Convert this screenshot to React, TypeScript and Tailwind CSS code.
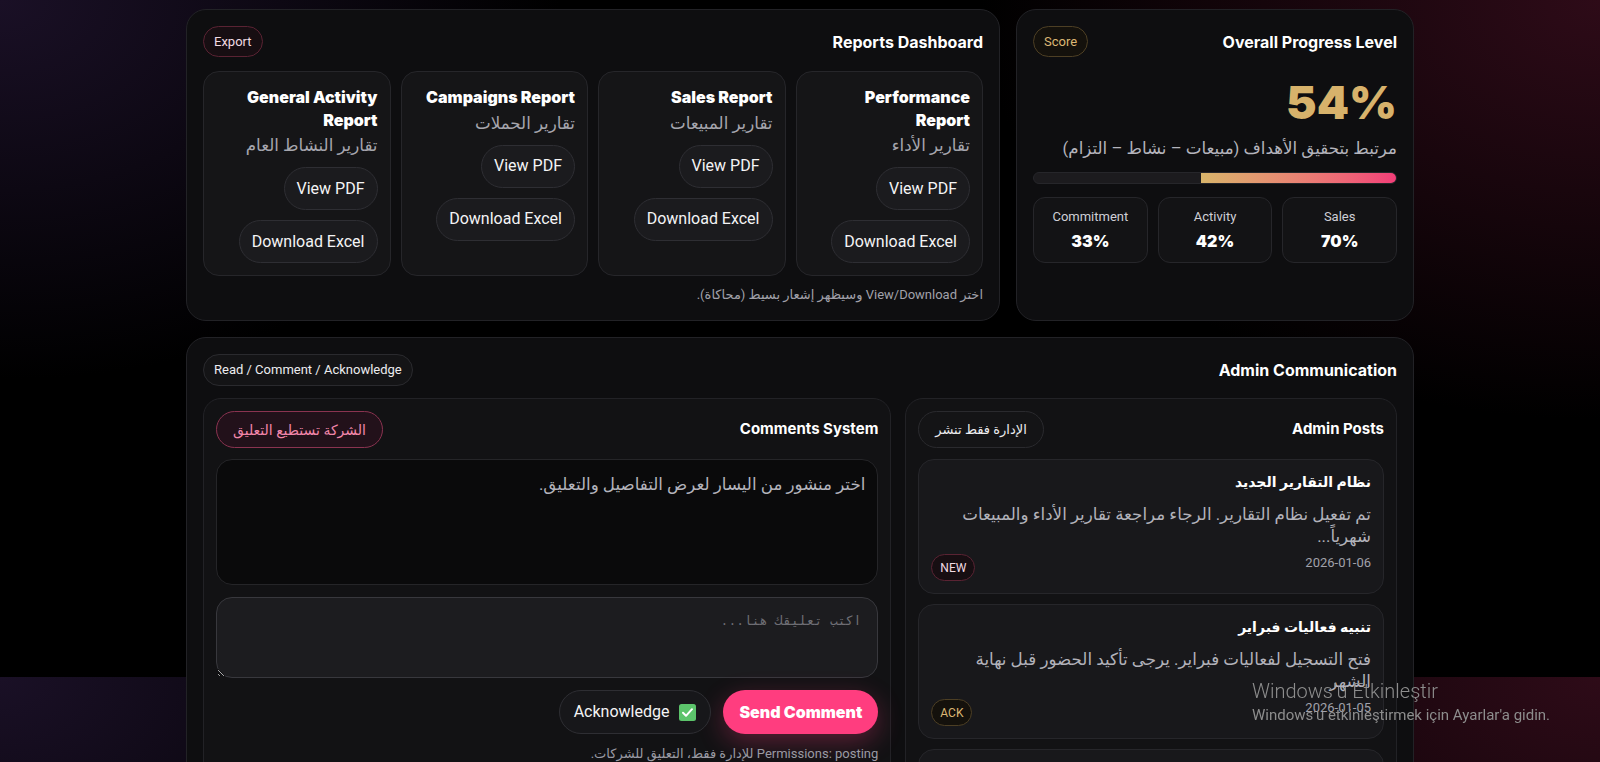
import React from 'react';

const reports = [
  { en: 'Performance Report', ar: 'تقارير الأداء' },
  { en: 'Sales Report', ar: 'تقارير المبيعات' },
  { en: 'Campaigns Report', ar: 'تقارير الحملات' },
  { en: 'General Activity Report', ar: 'تقارير النشاط العام' },
];

const stats = [
  { label: 'Sales', value: '70%' },
  { label: 'Activity', value: '42%' },
  { label: 'Commitment', value: '33%' },
];

const posts = [
  {
    title: 'نظام التقارير الجديد',
    body: 'تم تفعيل نظام التقارير. الرجاء مراجعة تقارير الأداء والمبيعات شهرياً...',
    date: '2026-01-06',
    tag: 'NEW',
  },
  {
    title: 'تنبيه فعاليات فبراير',
    body: 'فتح التسجيل لفعاليات فبراير. يرجى تأكيد الحضور قبل نهاية الشهر',
    date: '2026-01-05',
    tag: 'ACK',
  },
  {
    title: 'تحديث سياسة العمولات',
    body: 'تم تحديث نسب العمولات للربع الأول. راجع التفاصيل في قسم التقارير.',
    date: '2026-01-03',
    tag: 'NEW',
  },
];

const tones = {
  pink: 'border-[#5a2333] bg-[#170e12] text-[#f1dbe3]',
  hot: 'border-[#8a3350] bg-[#22111a] text-[#f287aa]',
  gold: 'border-[#4d3f24] bg-[#14110c] text-[#dcb774]',
  neutral: 'border-[#2a2a2e] bg-[#141416] text-[#ececef]',
};

function Pill({
  children,
  tone = 'neutral',
  className = '',
}: {
  children: React.ReactNode;
  tone?: keyof typeof tones;
  className?: string;
}) {
  return (
    <span
      className={`inline-flex shrink-0 items-center justify-center whitespace-nowrap rounded-full border ${tones[tone]} ${className}`}
    >
      {children}
    </span>
  );
}

function Btn({ children }: { children: React.ReactNode }) {
  return (
    <button className="flex h-[43px] items-center rounded-full border border-[#2e2e33] bg-[#1b1b1e] px-3 text-base text-[#f4f4f5]">
      {children}
    </button>
  );
}

function ProgressCard() {
  return (
    <section className="rounded-[20px] border border-[#222226] bg-[#0e0e10] p-4">
      <div className="flex items-center justify-between">
        <h2 className="font-['Inter',sans-serif] text-base font-bold text-white">Overall Progress Level</h2>
        <Pill tone="gold" className="h-[31px] px-2.5 text-[13px]">
          Score
        </Pill>
      </div>
      <div className="mt-[21px] font-['Inter',sans-serif] text-[46px] font-black leading-[48px] text-[#d7b26b]">
        54%
      </div>
      <p className="mt-2.5 text-[16.7px] leading-[26px] text-[#b4b4bc]">
        مرتبط بتحقيق الأهداف (مبيعات – نشاط – التزام)
      </p>
      <div className="mt-2.5 h-3 overflow-hidden rounded-full border border-[#26262a] bg-[#1c1b1e]">
        <div className="h-full w-[54%] bg-linear-to-r from-[#d8b46a] to-[#f23d78]" />
      </div>
      <div className="mt-[13px] grid grid-cols-3 gap-2.5">
        {stats.map((s) => (
          <div
            key={s.label}
            className="rounded-xl border border-[#26262a] bg-[#131315] py-2.5 text-center"
          >
            <div className="text-[13px] leading-[18px] text-[#cfcfd6]">{s.label}</div>
            <div className="mt-1 font-['Inter',sans-serif] text-base font-black leading-[22px] text-white">
              {s.value}
            </div>
          </div>
        ))}
      </div>
    </section>
  );
}

function ReportsCard() {
  return (
    <section className="rounded-[20px] border border-[#222226] bg-[#0e0e10] p-4">
      <div className="flex items-center justify-between">
        <h2 className="font-['Inter',sans-serif] text-base font-bold text-white">Reports Dashboard</h2>
        <Pill tone="pink" className="h-[31px] px-2.5 text-[13px]">
          Export
        </Pill>
      </div>
      <div className="mt-[14px] grid grid-cols-4 gap-2.5">
        {reports.map((r) => (
          <div key={r.en} className="rounded-2xl border border-[#26262a] bg-[#151517] px-3 pb-3 pt-3.5">
            <div className="font-['Inter',sans-serif] text-base font-black leading-[22.6px] text-white">
              {r.en}
            </div>
            <div className="mt-0.5 text-[16.7px] leading-[26px] text-[#a6a6ae]">{r.ar}</div>
            <div className="mt-2 flex flex-wrap gap-2.5">
              <Btn>View PDF</Btn>
              <Btn>Download Excel</Btn>
            </div>
          </div>
        ))}
      </div>
      <p className="mt-2.5 text-[13px] leading-[18px] text-[#a1a1aa]">
        اختر View/Download وسيظهر إشعار بسيط (محاكاة).
      </p>
    </section>
  );
}

function CheckBox() {
  return (
    <svg width="17" height="17" viewBox="0 0 17 17" className="shrink-0">
      <rect x="0" y="0" width="17" height="17" rx="2.5" fill="#5cc46b" />
      <path
        d="M4 8.8l3 3 6-6.6"
        fill="none"
        stroke="#fff"
        strokeWidth="2"
        strokeLinecap="round"
        strokeLinejoin="round"
      />
    </svg>
  );
}

function AdminPosts() {
  return (
    <div className="rounded-[18px] border border-[#222226] bg-[#121214] p-3">
      <div className="flex items-center justify-between">
        <h3 className="font-['Inter',sans-serif] text-[15px] font-bold text-white">Admin Posts</h3>
        <Pill className="h-[37px] px-4 text-[13px]">الإدارة فقط تنشر</Pill>
      </div>
      <div className="mt-[11px] flex flex-col gap-2.5">
        {posts.map((p) => (
          <div key={p.title} className="rounded-2xl border border-[#26262a] bg-[#18181b] p-3">
            <div className="text-sm font-bold leading-5 text-white">{p.title}</div>
            <p className="mt-3 text-[16.7px] leading-[22px] text-[#b2b2ba]">{p.body}</p>
            <div className="mt-1.5 flex items-start justify-between">
              <span className="text-[13px] leading-[17px] text-[#a1a1aa]">{p.date}</span>
              <Pill tone={p.tag === 'ACK' ? 'gold' : 'pink'} className="h-[27px] px-2 text-xs">
                {p.tag}
              </Pill>
            </div>
          </div>
        ))}
      </div>
    </div>
  );
}

function Comments() {
  return (
    <div className="rounded-[18px] border border-[#222226] bg-[#121214] p-3">
      <div className="flex items-center justify-between">
        <h3 className="font-['Inter',sans-serif] text-[15px] font-bold text-white">Comments System</h3>
        <Pill tone="hot" className="h-[37px] px-4 text-sm">
          الشركة تستطيع التعليق
        </Pill>
      </div>
      <div className="mt-[11px] h-[126px] rounded-2xl border border-[#252528] bg-[#0a0a0b] p-3">
        <p className="text-[16.7px] leading-[26px] text-[#b4b4bc]">
          اختر منشور من اليسار لعرض التفاصيل والتعليق.
        </p>
      </div>
      <textarea
        placeholder="اكتب تعليقك هنا..."
        className="mt-3 block h-[81px] w-full resize-y rounded-2xl border border-[#38383d] bg-[#1c1c1f] px-4 pt-3.5 font-['Liberation_Mono','DejaVu_Sans_Mono',monospace] text-[13px] text-white outline-none placeholder:text-[#6e6e74]"
      />
      <div className="mt-3 flex items-center gap-3">
        <button className="h-[44px] rounded-full bg-[#ff3d7f] px-4 font-['Inter',sans-serif] text-base font-black text-white shadow-[0_8px_26px_rgba(255,61,127,0.3)]">
          Send Comment
        </button>
        <button className="flex h-[44px] items-center gap-2.5 rounded-full border border-[#2e2e33] bg-[#17171a] px-3.5 text-base text-[#f4f4f5]">
          <CheckBox />
          <span>Acknowledge</span>
        </button>
      </div>
      <p className="mt-2.5 text-[13px] leading-5 text-[#9a9aa3]">
        Permissions: posting للإدارة فقط، التعليق للشركات.
      </p>
    </div>
  );
}

function AdminCommunication() {
  return (
    <section className="rounded-[20px] border border-[#222226] bg-[#0e0e10] p-4">
      <div className="flex items-center justify-between">
        <h2 className="font-['Inter',sans-serif] text-base font-bold text-white">Admin Communication</h2>
        <Pill className="h-[32px] px-2.5 text-[13px]">Read / Comment / Acknowledge</Pill>
      </div>
      <div className="mt-3 grid grid-cols-[1fr_1.4fr] gap-3.5">
        <AdminPosts />
        <Comments />
      </div>
    </section>
  );
}

export default function App() {
  return (
    <div
      dir="rtl"
      className="min-h-screen bg-black bg-[radial-gradient(ellipse_560px_380px_at_0%_0%,#1a1026_0%,rgba(0,0,0,0)_100%),radial-gradient(ellipse_620px_420px_at_100%_0%,#2e0b18_0%,rgba(0,0,0,0)_100%)] bg-[length:100%_677px] bg-repeat-y font-['Roboto','DejaVu_Sans',sans-serif] text-white"
    >
      <div className="mx-auto flex w-[1228px] flex-col gap-4 pt-[9px]">
        <div className="grid grid-cols-[398px_1fr] gap-4">
          <ProgressCard />
          <ReportsCard />
        </div>
        <AdminCommunication />
      </div>
      <div
        dir="ltr"
        className="pointer-events-none fixed left-[1252px] top-[677px] font-['Roboto',sans-serif] text-[#8d8d8d]"
      >
        <div className="text-[20px] font-light leading-7">Windows'u Etkinleştir</div>
        <div className="text-[15px] leading-5">Windows'u etkinleştirmek için Ayarlar'a gidin.</div>
      </div>
    </div>
  );
}
